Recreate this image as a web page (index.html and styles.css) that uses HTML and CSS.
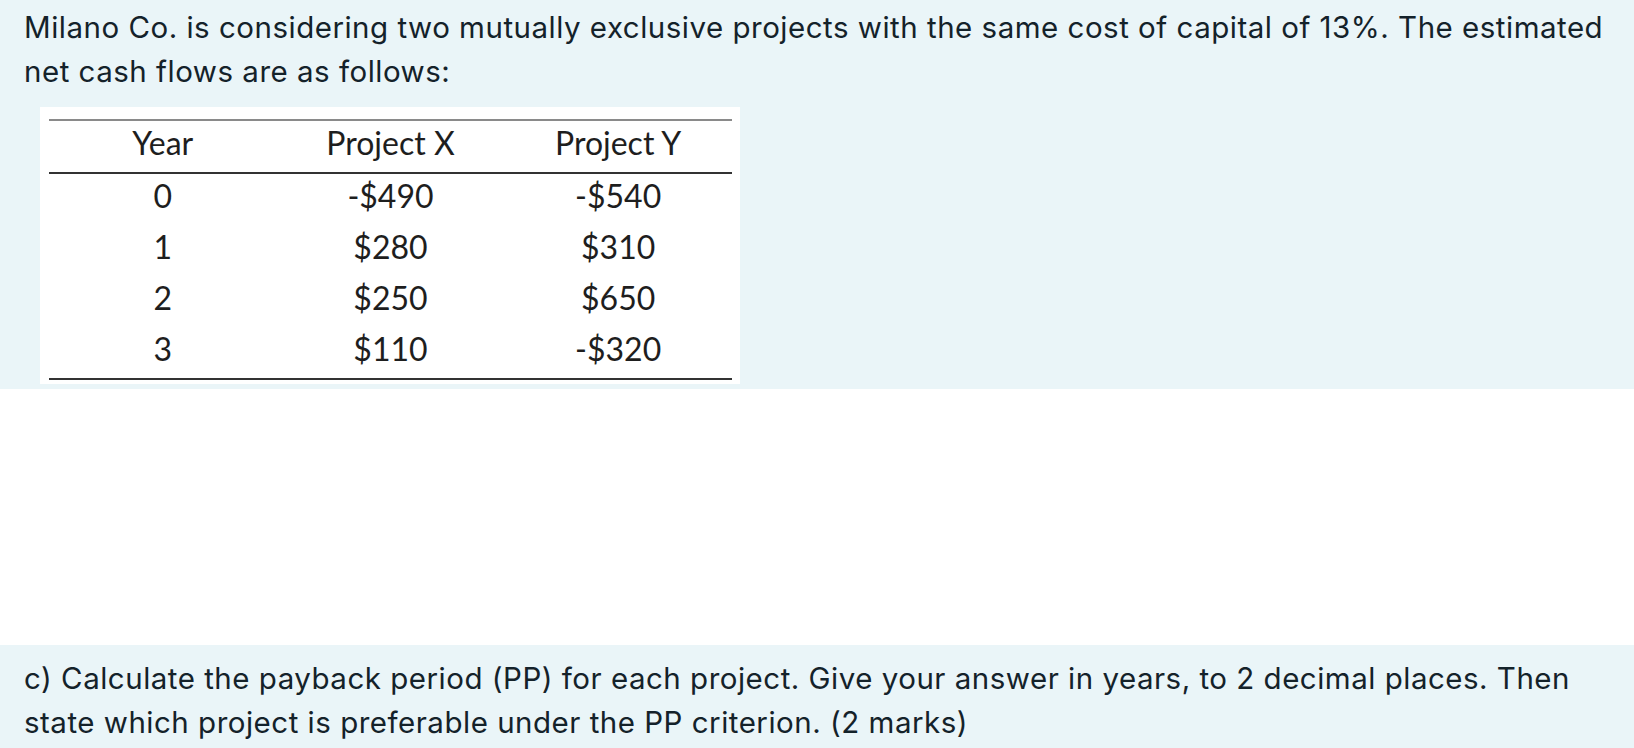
FILE: index.html
```html
<!DOCTYPE html>
<html>
<head>
<meta charset="utf-8">
<link rel="stylesheet" href="styles.css">
</head>
<body>
<section class="block block-top">
  <p class="text">Milano Co. is considering two mutually exclusive projects with the same cost of capital of 13%. The estimated net cash flows are as follows:</p>
  <div class="table-box">
    <table class="cash">
      <thead>
        <tr><th>Year</th><th>Project X</th><th>Project Y</th></tr>
      </thead>
      <tbody>
        <tr><td>0</td><td>-$490</td><td>-$540</td></tr>
        <tr><td>1</td><td>$280</td><td>$310</td></tr>
        <tr><td>2</td><td>$250</td><td>$650</td></tr>
        <tr><td>3</td><td>$110</td><td>-$320</td></tr>
      </tbody>
    </table>
  </div>
</section>
<div class="gap"></div>
<section class="block block-bottom">
  <p class="text">c) Calculate the payback period (PP) for each project. Give your answer in years, to 2 decimal places. Then state which project is preferable under the PP criterion. (2 marks)</p>
</section>
</body>
</html>
```
FILE: styles.css
```css
html, body {
  margin: 0;
  padding: 0;
  background: #ffffff;
}
.block {
  background: #eaf5f8;
  padding: 0 24px;
  box-sizing: border-box;
}
.block-top {
  height: 389px;
  padding-top: 5px;
}
.gap {
  height: 256px;
}
.block-bottom {
  height: 103px;
  padding-top: 11px;
}
.text {
  margin: 0;
  font-family: Inter, "Liberation Sans", sans-serif;
  font-size: 29.5px;
  letter-spacing: 0.5px;
  line-height: 44px;
  color: #14222a;
  width: 1590px;
}
.table-box {
  background: #ffffff;
  margin-top: 14px;
  margin-left: 16px;
  width: 700px;
  height: 277px;
  box-sizing: border-box;
  padding: 12px 8px 0 9px;
}
.cash {
  width: 683px;
  border-collapse: collapse;
  font-family: Lato, "Open Sans", sans-serif;
  font-size: 32px;
  line-height: 36px;
  color: #1e1e1e;
  border-top: 2px solid #8a8a8a;
  border-bottom: 2px solid #333333;
}
.cash th, .cash td {
  width: 33.33%;
  text-align: center;
  font-weight: normal;
  padding: 0;
}
.cash th {
  height: 43px;
  padding-bottom: 8px;
  border-bottom: 2px solid #333333;
}
.cash td {
  height: 44px;
  padding-bottom: 7px;
}
```
